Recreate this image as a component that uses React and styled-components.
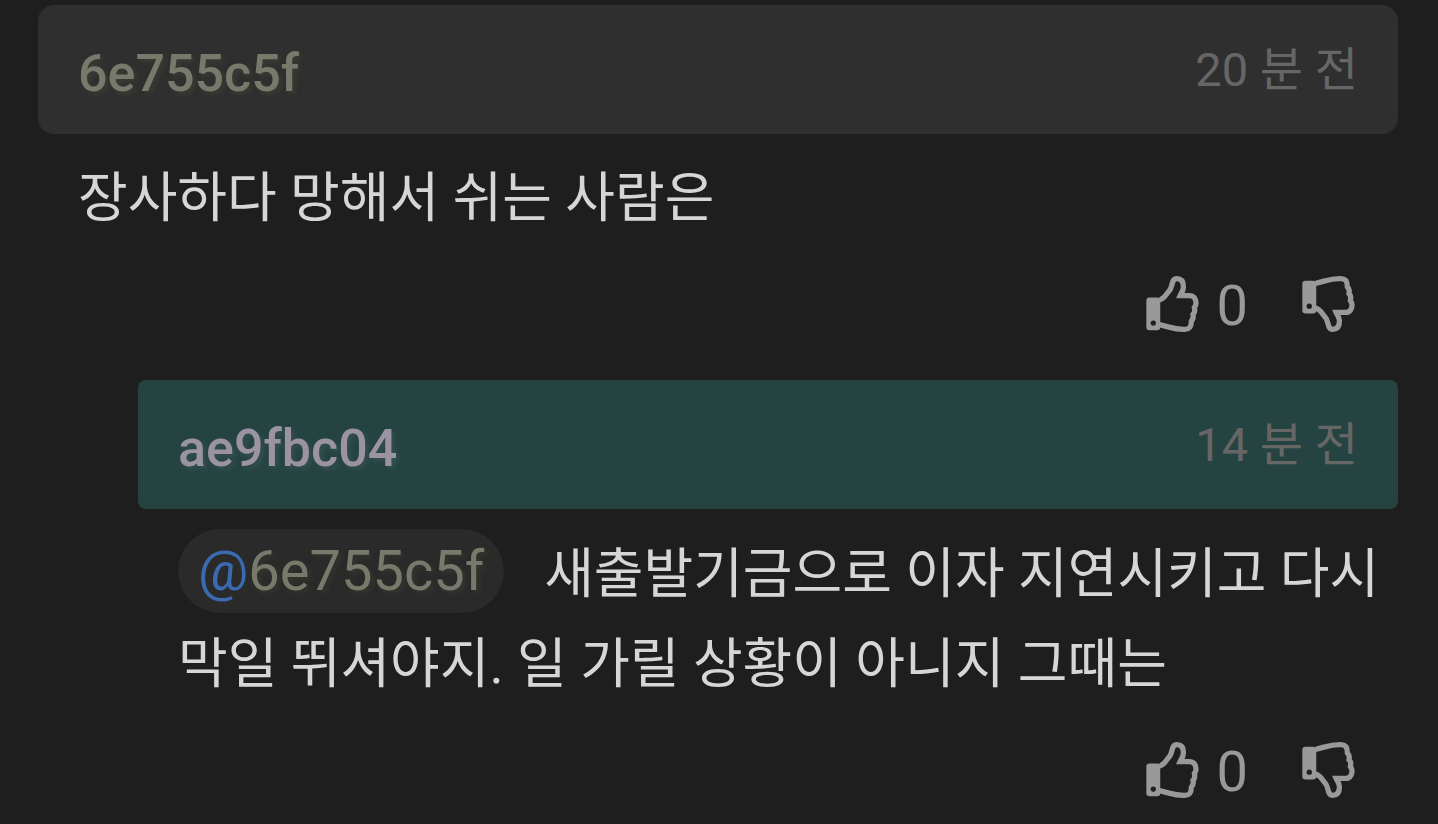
import React from 'react';
import styled, { createGlobalStyle } from 'styled-components';

const GlobalStyle = createGlobalStyle`
  *, *::before, *::after { box-sizing: border-box; }
  body {
    margin: 0;
    background: #1e1e1e;
    color: #d6d6d6;
    font-family: Roboto, "Noto Sans CJK KR", sans-serif;
  }
`;

const Thread = styled.main`
  padding: 5px 40px 0 38px;
`;

const Comment = styled.article`
  margin-left: ${(p) => (p.$reply ? '100px' : '0')};
`;

const Header = styled.header`
  display: flex;
  justify-content: space-between;
  align-items: center;
  height: 129px;
  padding: 0 40px;
  border-radius: ${(p) => (p.$reply ? '8px' : '16px')};
  background: ${(p) => (p.$reply ? '#254441' : '#2f2f2f')};
`;

const Author = styled.h2`
  margin: 0;
  padding-top: 8px;
  font-size: 52px;
  line-height: 64px;
  font-weight: 500;
  color: ${(p) => p.$color};
  text-shadow: 3px 3px 5px ${(p) => p.$glow};
`;

const Time = styled.time`
  font-size: 47px;
  line-height: 64px;
  color: #666666;
`;

const Body = styled.p`
  margin: 0;
  padding: 20px 0 0 40px;
  font-size: 54px;
  line-height: 90px;
`;

const Mention = styled.a`
  display: inline-block;
  margin-right: 40px;
  padding: 0 20px;
  border-radius: 42px;
  background: #2a2a2a;
  font-size: 56px;
  line-height: 84px;
  vertical-align: 3px;
  color: #3a6ab0;
  text-decoration: none;
`;

const MentionName = styled.span`
  color: #77796b;
  text-shadow: 3px 3px 5px #35362f;
`;

const Votes = styled.footer`
  display: flex;
  justify-content: flex-end;
  gap: 54px;
  height: 136px;
  padding: 28px 43px 0 0;
`;

const VoteButton = styled.button`
  display: flex;
  align-items: center;
  gap: 18px;
  height: 64px;
  padding: 0;
  border: 0;
  background: none;
  color: #999999;
  font: inherit;
  font-size: 56px;
  line-height: 64px;
  cursor: pointer;
`;

const Count = styled.span`
  padding-top: 4px;
`;

const ThumbIcon = styled.svg`
  display: block;
  width: 53px;
  height: 56px;
  overflow: visible;
`;

const HAND =
  'M60 89 C75 86 80 71 89 62 C101 50 94 25 112 25 C127 25 132 36 132 50 C132 62 126 67 122 76 H150 C163 76 170 86 170 99 C170 105 167 109 165 112 C167 120 165 129 161 133 C163 142 160 149 156 153 C156 171 151 178 136 178 C105 179 92 171 60 164';

function Thumb({ down }) {
  const top = down ? 31 : 82;
  return (
    <ThumbIcon viewBox="20 17 158 169" aria-hidden="true">
      <path
        d={HAND}
        transform={down ? 'matrix(1 0 0 -1 0 203)' : undefined}
        fill="none"
        stroke="currentColor"
        strokeWidth="16"
      />
      <rect x="20" y={top} width="42" height="99" rx="10" fill="currentColor" />
      <circle cx="41" cy={top + 77} r="8" fill="#1e1e1e" />
    </ThumbIcon>
  );
}

const comments = [
  {
    id: 'a',
    author: '6e755c5f',
    color: '#77796b',
    glow: '#3b3c34',
    time: '20 분 전',
    text: '장사하다 망해서 쉬는 사람은',
  },
  {
    id: 'b',
    reply: true,
    author: 'ae9fbc04',
    color: '#9b93a3',
    glow: '#35504f',
    time: '14 분 전',
    mention: '6e755c5f',
    text: '새출발기금으로 이자 지연시키고 다시 막일 뛰셔야지. 일 가릴 상황이 아니지 그때는',
  },
];

export default function App() {
  return (
    <>
      <GlobalStyle />
      <Thread>
        {comments.map((c) => (
          <Comment key={c.id} $reply={c.reply}>
            <Header $reply={c.reply}>
              <Author $color={c.color} $glow={c.glow}>{c.author}</Author>
              <Time>{c.time}</Time>
            </Header>
            <Body>
              {c.mention && (
                <Mention href={`#${c.mention}`}>
                  @<MentionName>{c.mention}</MentionName>
                </Mention>
              )}
              {c.text}
            </Body>
            <Votes>
              <VoteButton type="button" aria-label="좋아요 0">
                <Thumb />
                <Count>0</Count>
              </VoteButton>
              <VoteButton type="button" aria-label="싫어요">
                <Thumb down />
              </VoteButton>
            </Votes>
          </Comment>
        ))}
      </Thread>
    </>
  );
}
